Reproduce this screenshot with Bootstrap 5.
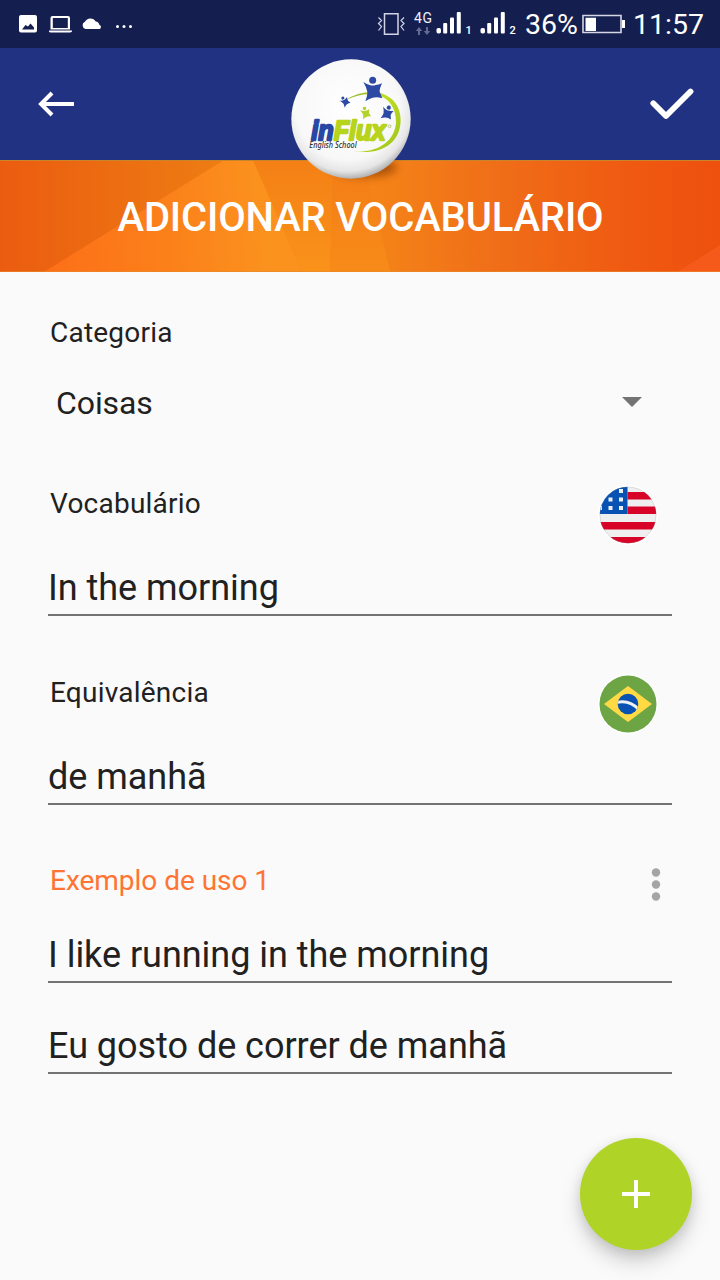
<!DOCTYPE html>
<html lang="pt-BR">
<head>
<meta charset="utf-8">
<meta name="viewport" content="width=device-width, initial-scale=1">
<title>Adicionar vocabulário</title>
<link href="https://cdn.jsdelivr.net/npm/bootstrap@5.3.0/dist/css/bootstrap.min.css" rel="stylesheet">
<style>
  body { font-family: Roboto, "Noto Sans", sans-serif; background: #fafafa; color: #212121; }
  .screen { width: 720px; height: 1280px; }
  svg { display: block; flex: none; }
  .status-bar { height: 48px; background: #151f4f; color: #fff; }
  .status-text { font-size: 28.500px; line-height: 48px; padding-top: 2px; }
  .battery { margin: 0 0 1px 4px; }
  .app-bar { height: 112px; background: #223282; padding: 0 24px; }
  .logo { left: 280px; top: 0; z-index: 2; }
  .banner { height: 112px; }
  .banner-title { font-size: 40px; line-height: 48px; font-weight: 500; letter-spacing: -.15px; color: #fff; padding-top: 34px; padding-left: 1px; }
  .form-area { padding: 44px 48px 0; }
  .field-label { font-size: 28px; line-height: 33px; padding-left: 2px; letter-spacing: .22px; }
  .category { height: 38px; margin: 35px 0 63px; padding: 0 30px 0 8px; font-size: 32px; line-height: 38px; letter-spacing: -.1px; }
  .category svg { margin-bottom: 2px; }
  .label-row { height: 60px; padding: 2px 14px 0 0; }
  .label-row svg { margin-top: -2px; }
  .field-value { height: 50px; padding-top: 1px; font-size: 36px; line-height: 42px; letter-spacing: -.03px; border-bottom: 2px solid #737373; }
  .field-gap { margin-top: 21px; }
  .group-gap { margin-bottom: 58px; }
  .example-row { height: 48px; margin-bottom: 21px; padding-right: 10px; color: #ff7433; }
  .example-row .field-label { letter-spacing: -.03px; }
  .fab { right: 28px; bottom: 30px; width: 112px; height: 112px; background: #afd427; box-shadow: 0 12px 20px rgba(0,0,0,.17), 0 3px 12px rgba(0,0,0,.1); }
</style>
</head>
<body>
<div class="screen position-relative overflow-hidden d-flex flex-column">
  <div class="status-bar d-flex align-items-center">
    <svg width="525" height="48" viewBox="0 0 525 48" fill="#fff">
      <path fill-rule="evenodd" d="M21 15h14q2 0 2 2v13.500q0 2-2 2H21q-2 0-2-2V17q0-2 2-2zM22 29.500h12v-2l-3.500-4-2.500 3-2.500-1.500z"/>
      <path fill-rule="evenodd" d="M52.500 16h15.500q2 0 2 2v11.500H50.500V18q0-2 2-2zm.3 2V28h15V18zM49 30.500h23v1q-1 1-2 1H51q-2 0-2-1z"/>
      <path d="M85.500 29a3.800 3.800 0 0 1-.6-7.200 6.200 6.200 0 0 1 10.800-.3q3 .2 3.600 3.300a2.300 2.300 0 0 1 .5 4.200z"/>
      <circle cx="117.500" cy="26.500" r="1.500"/><circle cx="124" cy="26.500" r="1.500"/><circle cx="130.500" cy="26.500" r="1.500"/>
      <g fill="none" stroke="#d0d4e5" stroke-width="1.500"><path d="M384.500 13.800h13.500v20.500h-13.500z"/><path stroke-width="1.200" d="M378.500 17.500l3 3-3 3 3 3-3 4M404 17.500l-3 3 3 3-3 3 3 4"/></g>
      <text x="414" y="22.500" font-size="14" textLength="18" fill="#eef">4G</text>
      <path fill="#646b91" d="M419 27l3.200 4h-2.200v4h-2v-4h-2.200zM426 27h2v4h2.200L427 35l-3.200-4h2.200z"/>
      <g><rect x="436.500" y="28" width="4.500" height="5.500" rx="1.800"/><rect x="443.200" y="23" width="4" height="10.500" rx="1"/><rect x="450" y="17.500" width="4" height="16" rx="1"/><rect x="456.800" y="12" width="4" height="21.500" rx="1"/></g>
      <g><rect x="480.500" y="28" width="4.500" height="5.500" rx="1.800"/><rect x="487.200" y="23" width="4" height="10.500" rx="1"/><rect x="494" y="17.500" width="4" height="16" rx="1"/><rect x="500.800" y="12" width="4" height="21.500" rx="1"/></g>
      <text x="465.500" y="33.500" font-size="11" font-weight="500">1</text><text x="509.500" y="33.500" font-size="11" font-weight="500">2</text>
    </svg>
    <span class="status-text">36%</span>
    <svg class="battery" width="44" height="20" viewBox="0 0 44 20"><path fill="none" stroke="#d4d7e3" stroke-width="1.600" d="M1 1.500h38v17H1z"/><path fill="#fff" d="M3.500 3.800H14V17H3.500zM40 6h3v8h-3z"/></svg>
    <span class="status-text ms-auto me-3">11:57</span>
  </div>

  <header class="position-relative">
    <div class="app-bar d-flex justify-content-between">
      <svg width="60" height="112" viewBox="24 48 60 112" fill="none" stroke="#fff" stroke-width="4"><path d="M74 104H41M52 93 41 104l11 11"/></svg>
      <svg width="60" height="112" viewBox="636 48 60 112" fill="none" stroke="#fff" stroke-width="5.800" stroke-linecap="round" stroke-linejoin="round"><path d="M653.300 103.300 666 116 690.500 91.500"/></svg>
    </div>
    <svg class="logo position-absolute" width="145" height="145" viewBox="0 0 435 435">
      <defs>
        <radialGradient id="ball" cx=".47" cy=".4" r=".61"><stop offset="0" stop-color="#fff"/><stop offset=".72" stop-color="#f8f8f8"/><stop offset=".88" stop-color="#e6e6e7"/><stop offset="1" stop-color="#aaa"/></radialGradient>
        <linearGradient id="swoosh" x2="1" y2="1"><stop stop-color="#8fb13a"/><stop offset=".4" stop-color="#c0dc20"/><stop offset="1" stop-color="#9dc31c"/></linearGradient>
        <filter id="soft" x="-30%" y="-80%" width="160%" height="260%"><feGaussianBlur stdDeviation="13"/></filter>
        <clipPath id="below"><path d="M0 336h435v99H0z"/></clipPath>
        <g id="person"><circle cy="-34" r="10.500"/><path d="M-28-29Q-17-22-9-20Q0-17 9-20Q18-20 28-25Q20-7 21 0L29 20Q12 14 0 18Q-12 21-22 29Q-15 9-16 0Q-19-14-28-29z"/></g>
      </defs>
      <g clip-path="url(#below)"><ellipse cx="255" cy="358" rx="95" ry="29" fill="#843800" opacity=".65" filter="url(#soft)"/></g>
      <circle cx="213" cy="213" r="179" fill="url(#ball)"/>
      <path fill="url(#swoosh)" d="M199 156Q230 132 278 132C330 134 363 170 362 218C360 285 305 322 222 310C291 315 344 281 348 224C349 181 326 144 280 139Q237 136 199 156z"/>
      <g fill="#2c49a4"><use href="#person" transform="translate(278 131)"/><use href="#person" transform="translate(196 163) rotate(-30) scale(.44)"/><use href="#person" transform="translate(320 198) rotate(18) scale(.6)"/></g>
      <use href="#person" fill="#b3d22b" transform="translate(257 198) rotate(-12) scale(.5)"/>
      <g transform="translate(94 275) scale(.89 1)">
        <text font-family="'Liberation Sans', Arial, sans-serif" font-size="84" font-weight="700" font-style="italic" textLength="250" lengthAdjust="spacingAndGlyphs" stroke-linejoin="round" stroke-width="7"><tspan fill="#2749a5" stroke="#2749a5">in</tspan><tspan fill="#b7d31c" stroke="#b7d31c">Flux</tspan></text>
      </g>
      <circle cx="329" cy="235" r="4" fill="none" stroke="#9db43e" stroke-width="2"/>
      <text x="88" y="299" font-family="'Noto Sans', sans-serif" font-size="24" font-style="italic" font-weight="500" textLength="142" lengthAdjust="spacingAndGlyphs" fill="#303035">English School</text>
    </svg>
  </header>

  <div class="banner position-relative">
    <svg class="position-absolute top-0 start-0" width="720" height="112" viewBox="0 0 720 112">
      <defs>
        <linearGradient id="bg"><stop stop-color="#eb5c10"/><stop offset=".3" stop-color="#ed7c13"/><stop offset=".46" stop-color="#f78618"/><stop offset=".54" stop-color="#f48118"/><stop offset=".68" stop-color="#f06f18"/><stop offset=".88" stop-color="#ef5911"/><stop offset="1" stop-color="#ee500e"/></linearGradient>
        <linearGradient id="ray" gradientUnits="userSpaceOnUse" x1="45" y1="112" x2="270" y2="90"><stop stop-color="#fd6f18"/><stop offset=".55" stop-color="#fb801a"/><stop offset="1" stop-color="#fb921e"/></linearGradient>
        <linearGradient id="mid" x2="0" y2="1"><stop stop-color="#f48015"/><stop offset="1" stop-color="#fa921a"/></linearGradient>
        <linearGradient id="side" x2="0" y2="1"><stop stop-color="#f37d17"/><stop offset="1" stop-color="#f78b18"/></linearGradient>
      </defs>
      <path fill="url(#bg)" d="M0 0h720v112H0z"/>
      <path fill="url(#ray)" d="M44 112 224 0h29l49 112z"/>
      <path fill="url(#mid)" d="M253 0h80l-3 112h-28z"/>
      <path fill="url(#side)" d="M333 0h31l26 112h-60z"/>
      <path fill="#f55a1b" d="M677 112l43-27v27z"/>
      <path fill="#c9852b" d="M0 0h720v1H0z"/><path fill="#e68b2c" opacity=".6" d="M0 111h720v1H0z"/>
    </svg>
    <h1 class="banner-title position-relative text-center m-0">ADICIONAR VOCABULÁRIO</h1>
  </div>

  <main class="form-area">
    <div class="field-label">Categoria</div>
    <div class="category d-flex justify-content-between align-items-center"><span>Coisas</span><svg width="20" height="10" viewBox="0 0 20 10"><path fill="#737373" d="M0 0h20L10 10z"/></svg></div>

    <div class="label-row d-flex justify-content-between align-items-start">
      <div class="field-label">Vocabulário</div>
      <svg width="60" height="60" viewBox="0 0 60 60">
        <defs><clipPath id="us"><circle cx="30" cy="30" r="28.300"/></clipPath></defs>
        <circle cx="30" cy="30" r="30" fill="#fff"/>
        <g clip-path="url(#us)"><path fill="#efefef" d="M0 0h60v60H0z"/><path fill="#d80427" d="M29.500 7H60v7.500H29.500zM29.500 21.500H60V29H29.500zM0 37h60v7.500H0zM0 52h60v8H0z"/><path fill="#0752b3" d="M0 0h29.500v29H0z"/>
        <g fill="#e9eff5"><path d="M21 4h4v4h-4zM10.500 12.500h4v4h-4zM21 12.500h4v4h-4zM1 21h3v4H1zM10.500 21h4v4h-4zM21 21h4v4h-4z"/></g></g>
        <circle cx="30" cy="30" r="28" fill="none" stroke="#888" stroke-opacity=".2"/>
      </svg>
    </div>
    <div class="field-value field-gap group-gap">In the morning</div>

    <div class="label-row d-flex justify-content-between align-items-start">
      <div class="field-label">Equivalência</div>
      <svg width="60" height="60" viewBox="0 0 60 60">
        <defs><clipPath id="globe"><circle cx="30" cy="30" r="10.300"/></clipPath></defs>
        <circle cx="30" cy="30" r="30" fill="#fff"/><circle cx="30" cy="30" r="28.500" fill="#6da544"/><path fill="#ffda44" d="M6 30 30 12l24 18-24 18z"/>
        <circle cx="30" cy="30" r="10.300" fill="#0752b3"/><path clip-path="url(#globe)" d="M18 28.500Q32 25 41 36" fill="none" stroke="#eff1f3" stroke-width="3"/>
      </svg>
    </div>
    <div class="field-value field-gap" style="margin-bottom:59px">de manhã</div>

    <div class="example-row d-flex justify-content-between align-items-start">
      <div class="field-label">Exemplo de uso 1</div>
      <svg width="12" height="40" viewBox="0 0 12 40" fill="#a5a5a5"><circle cx="6" cy="8.500" r="4.200"/><circle cx="6" cy="20.500" r="4.200"/><circle cx="6" cy="32.500" r="4.200"/></svg>
    </div>
    <div class="field-value mb-0">I like running in the morning</div>
    <div class="field-value" style="margin-top:41px">Eu gosto de correr de manhã</div>
  </main>

  <button type="button" aria-label="Adicionar" class="fab btn position-absolute rounded-circle border-0 p-0 d-flex align-items-center justify-content-center">
    <svg width="28" height="28" viewBox="0 0 28 28"><path fill="#fff" d="M12 0h4v12h12v4H16v12h-4V16H0v-4h12z"/></svg>
  </button>
</div>
<script src="https://cdn.jsdelivr.net/npm/bootstrap@5.3.0/dist/js/bootstrap.bundle.min.js"></script>
</body>
</html>
